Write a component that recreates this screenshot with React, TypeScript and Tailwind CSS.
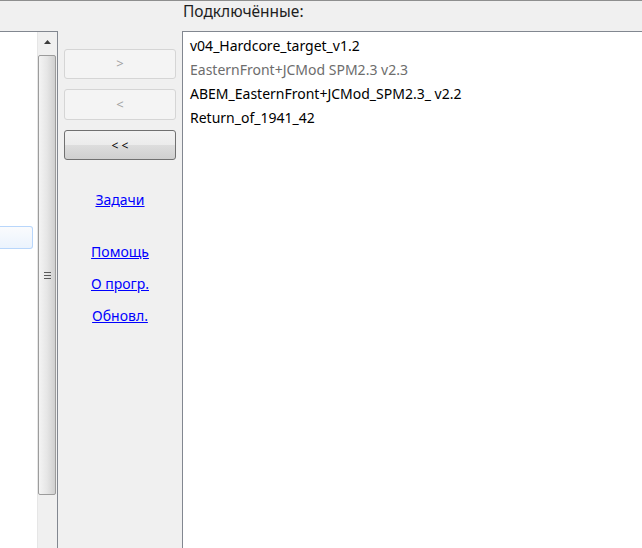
import React from "react";

const font = { fontFamily: '"Segoe UI", "Noto Sans", "Open Sans", sans-serif' };

export default function App() {
  const items = [
    { t: "v04_Hardcore_target_v1.2", c: "text-[#000000]" },
    { t: "EasternFront+JCMod SPM2.3 v2.3", c: "text-[#6d6d6d]" },
    { t: "ABEM_EasternFront+JCMod_SPM2.3_ v2.2", c: "text-[#000000]" },
    { t: "Return_of_1941_42", c: "text-[#000000]" },
  ];
  return (
    <div
      className="w-[642px] h-[548px] bg-[#f0f0f0] border-t border-[#8e8f8f] flex overflow-hidden"
      style={font}
    >
      {/* Left list */}
      <div className="w-[58px] flex flex-col">
        <div className="h-[30px]" />
        <div className="flex-1 flex border-t border-r border-[#828790] bg-white">
          <div className="flex-1 flex flex-col pr-[4px]">
            <div className="h-[194px]" />
            <div className="h-[23px] rounded-r-[3px] border border-l-0 border-[#b8d6fb] bg-gradient-to-b from-[#fafbfd] to-[#ebf3fd]" />
          </div>
          <div className="w-[20px] bg-[#f0f0f0] border-l border-[#e6e6e6] flex flex-col">
            <div className="h-[20px] flex items-center justify-center">
              <svg width="7" height="4" viewBox="0 0 7 4">
                <path d="M3.5 0 L7 4 L0 4 Z" fill="#3c3c3c" />
              </svg>
            </div>
            <div className="mt-[3px] h-[440px] mr-[1px] rounded-[2px] border border-[#9c9c9c] bg-gradient-to-r from-[#f4f4f4] via-[#e6e6e6] to-[#cfcfcf] flex items-center justify-center">
              <div className="flex flex-col gap-[2px]">
                <div className="w-[7px] h-[1px] bg-[#5a5a5a]" />
                <div className="w-[7px] h-[1px] bg-[#5a5a5a]" />
                <div className="w-[7px] h-[1px] bg-[#5a5a5a]" />
              </div>
            </div>
          </div>
        </div>
      </div>

      {/* Middle panel */}
      <div className="w-[124px] flex flex-col items-center pt-[48px]">
        <div className="w-[112px] h-[30px] rounded-[3px] border border-[#d5d5d5] bg-[#f4f4f4] flex items-center justify-center text-[13px] text-[#a0a0a0]">
          &gt;
        </div>
        <div className="mt-[10px] w-[112px] h-[31px] rounded-[3px] border border-[#d5d5d5] bg-[#f4f4f4] flex items-center justify-center text-[13px] text-[#a0a0a0]">
          &lt;
        </div>
        <div className="mt-[10px] w-[112px] h-[30px] rounded-[3px] border border-[#707070] bg-[linear-gradient(to_bottom,#f2f2f2_0%,#ebebeb_50%,#dddddd_50%,#cfcfcf_100%)] flex items-center justify-center text-[12px] text-[#000000] whitespace-pre pt-[2px]">
          {"< <"}
        </div>
        <a className="mt-[31px] text-[14px] text-[#0000ff] underline leading-[18px]">Задачи</a>
        <a className="mt-[34px] text-[14px] text-[#0000ff] underline leading-[18px]">Помощь</a>
        <a className="mt-[14px] text-[14px] text-[#0000ff] underline leading-[18px]">О прогр.</a>
        <a className="mt-[14px] text-[14px] text-[#0000ff] underline leading-[18px]">Обновл.</a>
      </div>

      {/* Right list */}
      <div className="flex-1 flex flex-col">
        <div className="h-[30px] text-[15.5px] text-[#1e1e1e] leading-[20px] pl-[1px]">
          Подключённые:
        </div>
        <div className="flex-1 border-t border-l border-[#828790] bg-white pl-[7px] pt-[2px]">
          {items.map((it) => (
            <div key={it.t} className={`h-[24px] leading-[24px] text-[14px] whitespace-nowrap ${it.c}`}>
              {it.t}
            </div>
          ))}
        </div>
      </div>
    </div>
  );
}
